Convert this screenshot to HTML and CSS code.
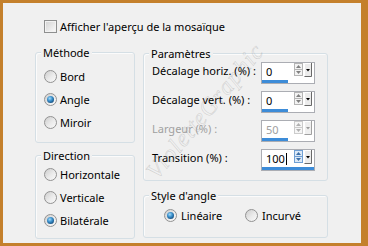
FILE: index.html
```html
<!DOCTYPE html>
<html lang="fr">
<head>
<meta charset="utf-8">
<title>Mosaïque</title>
<link rel="stylesheet" href="styles.css">
</head>
<body>
<div class="window">
  <label class="check-row"><span class="checkbox"></span><span>Afficher l'aperçu de la mosaïque</span></label>
  <div class="columns">
    <div class="col left">
      <div class="group methode">
        <div class="group-title">Méthode</div>
        <div class="radio-list">
          <div class="option"><span class="radio"></span>Bord</div>
          <div class="option"><span class="radio on"></span>Angle</div>
          <div class="option"><span class="radio"></span>Miroir</div>
        </div>
      </div>
      <div class="group direction">
        <div class="group-title">Direction</div>
        <div class="radio-list">
          <div class="option"><span class="radio"></span>Horizontale</div>
          <div class="option"><span class="radio"></span>Verticale</div>
          <div class="option"><span class="radio on"></span>Bilatérale</div>
        </div>
      </div>
    </div>
    <div class="col right">
      <div class="group params">
        <div class="group-title">Paramètres</div>
        <div class="param-list">
          <div class="param">
            <span class="param-label">Décalage horiz. (%) :</span>
            <div class="spin">
              <div class="spin-top">
                <span class="spin-value">0</span>
                <svg class="spin-arrows" width="9" height="13" viewBox="0 0 9 13"><rect x="0.5" y="0.5" width="8" height="12" fill="#f3f3f3" stroke="#b5b5b5"/><line x1="1" y1="6.5" x2="8" y2="6.5" stroke="#b5b5b5"/><path d="M4.5 2 L7 5 L2 5 Z" fill="#808080"/><path d="M2 8 L7 8 L4.5 11 Z" fill="#808080"/></svg>
                <svg class="spin-drop" width="8" height="14" viewBox="0 0 8 14"><rect x="0" y="0" width="8" height="14" fill="#ececec"/><path d="M0.5 13.5 H7.5 V0" fill="none" stroke="#6a6a6a"/><path d="M0.5 13 V0.5 H7" fill="none" stroke="#ffffff"/><path d="M2 6 H6 L4 8.5 Z" fill="#000"/></svg>
              </div>
              <div class="spin-bar" style="width:50%"></div>
            </div>
          </div>
          <div class="param">
            <span class="param-label">Décalage vert. (%) :</span>
            <div class="spin">
              <div class="spin-top">
                <span class="spin-value">0</span>
                <svg class="spin-arrows" width="9" height="13" viewBox="0 0 9 13"><rect x="0.5" y="0.5" width="8" height="12" fill="#f3f3f3" stroke="#b5b5b5"/><line x1="1" y1="6.5" x2="8" y2="6.5" stroke="#b5b5b5"/><path d="M4.5 2 L7 5 L2 5 Z" fill="#808080"/><path d="M2 8 L7 8 L4.5 11 Z" fill="#808080"/></svg>
                <svg class="spin-drop" width="8" height="14" viewBox="0 0 8 14"><rect x="0" y="0" width="8" height="14" fill="#ececec"/><path d="M0.5 13.5 H7.5 V0" fill="none" stroke="#6a6a6a"/><path d="M0.5 13 V0.5 H7" fill="none" stroke="#ffffff"/><path d="M2 6 H6 L4 8.5 Z" fill="#000"/></svg>
              </div>
              <div class="spin-bar" style="width:50%"></div>
            </div>
          </div>
          <div class="param disabled">
            <span class="param-label">Largeur (%) :</span>
            <div class="spin">
              <div class="spin-top">
                <span class="spin-value">50</span>
                <svg class="spin-arrows" width="9" height="13" viewBox="0 0 9 13"><rect x="0.5" y="0.5" width="8" height="12" fill="#f6f6f6" stroke="#cccccc"/><line x1="1" y1="6.5" x2="8" y2="6.5" stroke="#cccccc"/><path d="M4.5 2 L7 5 L2 5 Z" fill="#b0b0b0"/><path d="M2 8 L7 8 L4.5 11 Z" fill="#b0b0b0"/></svg>
                <svg class="spin-drop" width="8" height="14" viewBox="0 0 8 14"><rect x="0" y="0" width="8" height="14" fill="#efefef"/><path d="M0.5 13.5 H7.5 V0" fill="none" stroke="#a0a0a0"/><path d="M0.5 13 V0.5 H7" fill="none" stroke="#ffffff"/><path d="M2 6 H6 L4 8.5 Z" fill="#9a9a9a"/></svg>
              </div>
              <div class="spin-bar" style="width:50%"></div>
            </div>
          </div>
          <div class="param">
            <span class="param-label">Transition (%) :</span>
            <div class="spin focused">
              <div class="spin-top">
                <span class="spin-value">100<span class="caret"></span></span>
                <svg class="spin-arrows" width="9" height="13" viewBox="0 0 9 13"><rect x="0.5" y="0.5" width="8" height="12" fill="#dce9f7" stroke="#6f9fd3"/><line x1="1" y1="6.5" x2="8" y2="6.5" stroke="#6f9fd3"/><path d="M4.5 2 L7 5 L2 5 Z" fill="#3b6fa8"/><path d="M2 8 L7 8 L4.5 11 Z" fill="#3b6fa8"/></svg>
                <svg class="spin-drop" width="8" height="14" viewBox="0 0 8 14"><rect x="0" y="0" width="8" height="14" fill="#ececec"/><path d="M0.5 13.5 H7.5 V0" fill="none" stroke="#6a6a6a"/><path d="M0.5 13 V0.5 H7" fill="none" stroke="#ffffff"/><path d="M2 6 H6 L4 8.5 Z" fill="#000"/></svg>
              </div>
              <div class="spin-bar" style="width:100%"></div>
            </div>
          </div>
        </div>
      </div>
      <div class="group style">
        <div class="group-title">Style d'angle</div>
        <div class="style-options">
          <div class="option"><span class="radio on"></span>Linéaire</div>
          <div class="option"><span class="radio"></span>Incurvé</div>
        </div>
      </div>
    </div>
  </div>
  <div class="watermark" aria-hidden="true">VioletteGraphic</div>
</div>
</body>
</html>
```

FILE: styles.css
```css
* { box-sizing: border-box; }

html, body { margin: 0; padding: 0; }

body {
  width: 368px;
  height: 246px;
  overflow: hidden;
  background: #c4802c;
  font-family: "Noto Sans", "DejaVu Sans", sans-serif;
  font-size: 11px;
  line-height: 13px;
  color: #000;
}

.window {
  position: relative;
  margin: 3px 7px 0 3px;
  height: 240px;
  background: #f0f0f0;
  padding: 17px 0 0 32px;
  overflow: hidden;
}

.check-row {
  display: flex;
  align-items: center;
  gap: 3px;
  height: 13px;
  margin-left: 9px;
}

.checkbox {
  flex: none;
  width: 13px;
  height: 13px;
  border: 1px solid #8e8f8f;
  background: linear-gradient(135deg, #d2d2d2, #fbfbfb);
  box-shadow: inset 0 0 0 1px #f2f2f2;
}

.columns {
  display: flex;
  gap: 8px;
  margin-top: 19px;
}

.col {
  display: flex;
  flex-direction: column;
}

.col.left { width: 100px; gap: 12px; }
.col.right { width: 185px; gap: 14px; margin-top: 1px; }

.group {
  border: 1px solid #d5dfe5;
  border-radius: 3px;
  box-shadow: inset 1px 1px 0 #fbfbfb;
}

.methode { height: 91px; }
.direction { height: 84px; }
.params { height: 128px; }
.style { height: 43px; }

.group-title {
  width: max-content;
  margin: -7px 0 0 5px;
  padding: 0 2px;
  background: #f0f0f0;
  line-height: 13px;
}

.radio-list {
  display: flex;
  flex-direction: column;
  gap: 10px;
  padding-left: 8px;
}

.methode .radio-list { margin-top: 11px; }
.direction .radio-list { margin-top: 6px; }

.option {
  display: flex;
  align-items: center;
  gap: 3px;
  height: 13px;
  white-space: nowrap;
}

.radio {
  position: relative;
  flex: none;
  width: 13px;
  height: 13px;
  border-radius: 50%;
  border: 1px solid #929292;
  background: linear-gradient(135deg, #cdcdcd 0%, #ebebeb 55%, #fafafa 100%);
}

.radio.on::after {
  content: "";
  position: absolute;
  inset: 2px;
  border-radius: 50%;
  background: radial-gradient(circle at 40% 35%, #a8dcf8 0, #3d93cf 38%, #124a7a 80%);
}

.param-list {
  display: flex;
  flex-direction: column;
  gap: 7px;
  margin-top: 2px;
  padding-left: 8px;
}

.param {
  display: flex;
  align-items: flex-start;
  height: 22px;
}

.param-label {
  width: 109px;
  padding-top: 2px;
  white-space: nowrap;
}

.param.disabled .param-label,
.param.disabled .spin-value { color: #a0a0a0; }

.spin {
  display: flex;
  flex-direction: column;
  width: 54px;
  height: 22px;
  border: 1px solid #abadb3;
  background: #fff;
}

.spin-top {
  display: flex;
  height: 17px;
}

.spin-value {
  flex: 1;
  display: flex;
  align-items: flex-start;
  padding: 2px 0 0 4px;
  line-height: 13px;
}

.caret {
  width: 1px;
  height: 12px;
  margin: 1px 0 0 1px;
  background: #000;
}

.spin-arrows {
  flex: none;
  margin: 0 1px 0 0;
}

.spin-drop {
  flex: none;
  margin-right: 2px;
}

.spin-bar {
  height: 3px;
  margin-top: auto;
  background: #3d8cd8;
}

.style-options {
  display: grid;
  grid-template-columns: 81px auto;
  margin-top: 7px;
  padding-left: 20px;
}

.style-options .option { gap: 4px; }

.watermark {
  position: absolute;
  left: 118px;
  top: 96px;
  transform: rotate(-50deg);
  font-family: "Liberation Serif", serif;
  font-style: italic;
  font-size: 24px;
  line-height: 24px;
  letter-spacing: 1px;
  white-space: nowrap;
  color: transparent;
  -webkit-text-stroke: 0.5px rgba(150, 150, 150, 0.4);
  pointer-events: none;
}
```
